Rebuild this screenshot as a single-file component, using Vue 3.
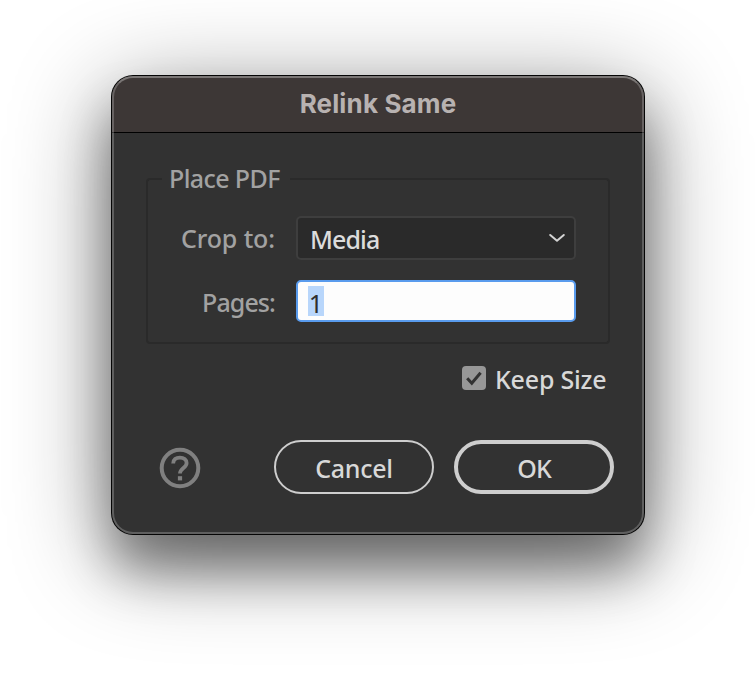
<script setup>
import { ref } from 'vue'

const title = 'Relink Same'
const crop = ref('Media')
const pages = ref('1')
const keepSize = ref(true)
</script>

<template>
  <main class="stage">
    <section class="dialog" role="dialog">
      <header class="titlebar"><span class="title">{{ title }}</span></header>
      <div class="content">
        <div class="group">
          <div class="group-head">
            <span class="rule rule-start"></span>
            <span class="legend">Place PDF</span>
            <span class="rule rule-end"></span>
          </div>
          <div class="group-body">
            <div class="row">
              <span class="label label-crop">Crop to:</span>
              <div class="select">
                <span class="value">{{ crop }}</span>
                <svg class="chevron" width="18" height="12" viewBox="0 0 18 12">
                  <path d="M2.2 3 9 8.8l6.8-5.8" fill="none" stroke="#d4d4d4" stroke-width="2" stroke-linecap="round" stroke-linejoin="round" />
                </svg>
              </div>
            </div>
            <div class="row row-pages">
              <span class="label label-pages">Pages:</span>
              <div class="input"><span class="selection">{{ pages }}</span></div>
            </div>
          </div>
        </div>
        <div class="keep" @click="keepSize = !keepSize">
          <span class="box">
            <svg v-if="keepSize" width="24" height="24" viewBox="0 0 24 24">
              <path d="M5.2 12.2 9.8 17.2 18.6 6.8" fill="none" stroke="#323232" stroke-width="3" />
            </svg>
          </span>
          <span class="keep-text">Keep Size</span>
        </div>
        <footer class="actions">
          <svg class="help" width="42" height="42" viewBox="0 0 42 42" fill="none" stroke="#808080">
            <circle cx="21" cy="21" r="18.3" stroke-width="4" />
            <path d="M14.2 16.4C14.2 12.6 17 10.6 20.9 10.6c3.9 0 6.7 2 6.7 5.4 0 4.9-6.6 5.2-6.6 10.6" stroke-width="3.8" />
            <path d="M21 29.2v4.2" stroke-width="4.2" />
          </svg>
          <button class="btn cancel"><span>Cancel</span></button>
          <button class="btn ok"><span>OK</span></button>
        </footer>
      </div>
    </section>
  </main>
</template>

<style>
body { margin: 0; background: #fff; }
</style>

<style scoped>
* { box-sizing: border-box; }
.stage {
  width: 756px;
  height: 682px;
  padding: 76px 0 0 112px;
  overflow: hidden;
  background: #fff;
  font-family: "Noto Sans", "Open Sans", sans-serif;
  font-size: 25px;
  line-height: 34px;
  white-space: nowrap;
}
.dialog {
  position: relative;
  width: 532px;
  height: 458px;
  border-radius: 21px;
  background: #323232;
  overflow: visible;
  box-shadow: 0 0 0 1px #050505, 0 36px 50px rgba(0, 0, 0, .38), 0 20px 100px rgba(0, 0, 0, .48);
}
.dialog::after {
  content: "";
  position: absolute;
  inset: 0;
  border: 2px solid rgba(255, 255, 255, .22);
  border-top-color: rgba(255, 255, 255, .32);
  border-radius: 21px;
  pointer-events: none;
}
.titlebar {
  height: 57px;
  padding-top: 10px;
  border-bottom: 1px solid #000;
  border-radius: 21px 21px 0 0;
  background: #3d3736;
  text-align: center;
}
.title {
  color: #b8b2b1;
  font-family: Inter, sans-serif;
  font-size: 26px;
  font-weight: 700;
  letter-spacing: .15px;
}
.content { padding: 28px 30px 0 34px; }
.group { width: 464px; }
.group-head {
  display: flex;
  height: 34px;
}
.rule {
  height: 17px;
  margin-top: 17px;
  border-top: 2px solid #2a2a2a;
}
.rule-start { width: 16px; border-left: 2px solid #2a2a2a; border-top-left-radius: 4px; }
.rule-end { flex: 1; border-right: 2px solid #2a2a2a; border-top-right-radius: 4px; }
.legend {
  width: 128px;
  padding-left: 7px;
  color: #a2a2a2;
  font-weight: 500;
  letter-spacing: -.6px;
}
.group-body {
  height: 149px;
  padding: 21px 32px 0;
  border: 2px solid #2a2a2a;
  border-top: 0;
  border-radius: 0 0 4px 4px;
}
.row { display: flex; align-items: center; justify-content: flex-end; height: 44px; }
.row-pages { height: 42px; margin-top: 20px; }
.label { margin-right: 21px; color: #a2a2a2; font-weight: 500; }
.label-crop { letter-spacing: -.1px; }
.label-pages { letter-spacing: -.9px; padding-top: 1px; }
.select {
  display: flex;
  align-items: center;
  justify-content: space-between;
  width: 280px;
  height: 44px;
  padding: 0 8px 0 12px;
  border: 2px solid #3e3e3e;
  border-radius: 5px;
  background: #2a2a2a;
  color: #dcdcdc;
}
.value { font-weight: 500; padding-top: 2px; letter-spacing: -.9px; }
.chevron { margin-bottom: 1px; }
.input {
  width: 280px;
  height: 42px;
  padding: 4px 10px;
  border: 2px solid #599bed;
  border-radius: 5px;
  background: #fdfdfd;
  color: #2e2e2e;
}
.selection { display: block; width: 16px; height: 30px; background: #b8d6fb; line-height: 34px; text-align: center; }
.keep {
  display: flex;
  align-items: center;
  height: 24px;
  margin: 22px 0 0 316px;
  color: #d8d8d8;
}
.box { display: flex; width: 24px; height: 24px; border-radius: 4px; background: #979797; }
.keep-text { margin-left: 9px; padding-top: 2px; font-weight: 500; letter-spacing: -.2px; }
.actions { display: flex; align-items: center; height: 54px; margin-top: 50px; }
.help { margin: 1px 73px 0 13px; }
.btn {
  width: 160px;
  height: 54px;
  padding: 1px 0 0;
  border: 2px solid #cecece;
  border-radius: 27px;
  background: transparent;
  color: #d8d8d8;
  font: 500 25px/34px "Noto Sans", "Open Sans", sans-serif;
  letter-spacing: -.3px;
}
.ok { margin-left: 20px; border-width: 4px; letter-spacing: -1px; }
</style>
